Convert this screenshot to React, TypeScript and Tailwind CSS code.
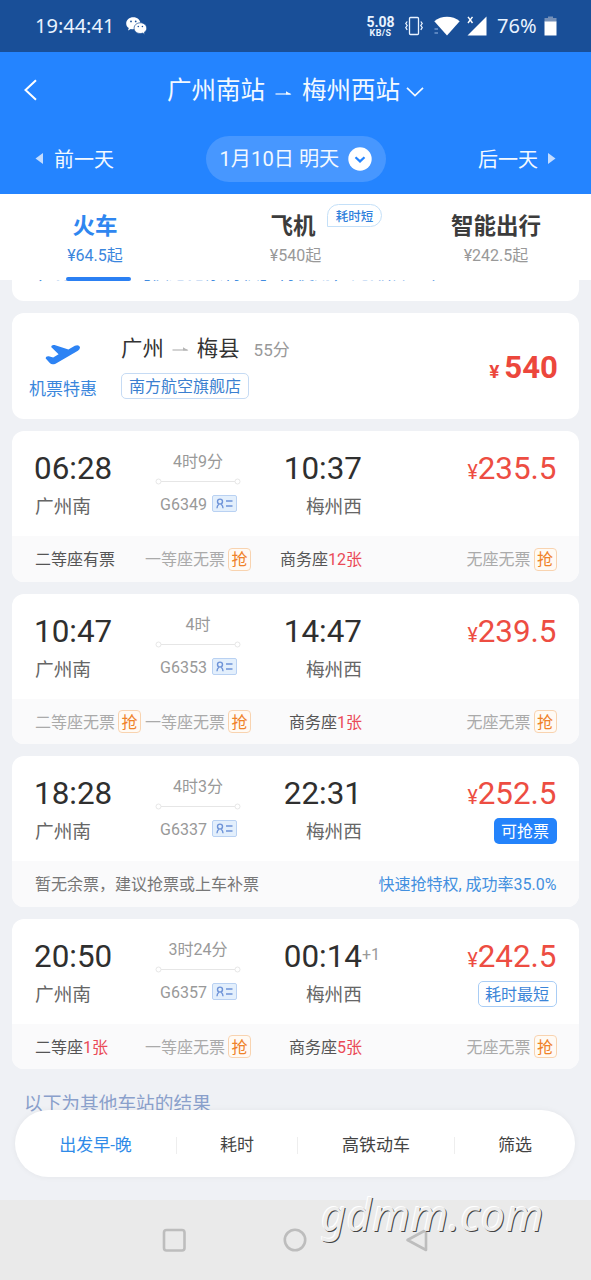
import { ReactNode } from "react";
import clsx from "clsx";

type Seat = {
  name: string;
  status?: string;
  count?: string;
  grab?: boolean;
};

type Train = {
  depart: string;
  arrive: string;
  nextDay?: boolean;
  duration: string;
  code: string;
  price: string;
  badge?: ReactNode;
  seats?: Seat[];
};

const trains: Train[] = [
  {
    depart: "06:28",
    arrive: "10:37",
    duration: "4时9分",
    code: "G6349",
    price: "235.5",
    seats: [
      { name: "二等座", status: "有票" },
      { name: "一等座", grab: true },
      { name: "商务座", count: "12张" },
      { name: "无座", grab: true },
    ],
  },
  {
    depart: "10:47",
    arrive: "14:47",
    duration: "4时",
    code: "G6353",
    price: "239.5",
    seats: [
      { name: "二等座", grab: true },
      { name: "一等座", grab: true },
      { name: "商务座", count: "1张" },
      { name: "无座", grab: true },
    ],
  },
  {
    depart: "18:28",
    arrive: "22:31",
    duration: "4时3分",
    code: "G6337",
    price: "252.5",
    badge: (
      <span className="flex h-[26px] w-[63px] items-center justify-center rounded-[5px] bg-[#2483fb] pt-[2px] text-[16px] text-white">
        可抢票
      </span>
    ),
  },
  {
    depart: "20:50",
    arrive: "00:14",
    nextDay: true,
    duration: "3时24分",
    code: "G6357",
    price: "242.5",
    badge: (
      <span className="flex h-[26px] w-[79px] items-center justify-center rounded-[5px] border border-[#a9cdf5] pt-[2px] text-[16px] text-[#3b85d8]">
        耗时最短
      </span>
    ),
    seats: [
      { name: "二等座", count: "1张" },
      { name: "一等座", grab: true },
      { name: "商务座", count: "5张" },
      { name: "无座", grab: true },
    ],
  },
];

function Arrow({ className }: { className?: string }) {
  return (
    <svg className={className} width="17" height="6" viewBox="0 0 17 6" fill="none" stroke="currentColor" strokeWidth="1.2">
      <path d="M0.5 4H15.5" />
      <path d="M11 1.2L16.5 4.4H11Z" fill="currentColor" stroke="none" />
    </svg>
  );
}

function WechatIcon() {
  return (
    <svg className="ml-[11px]" width="21" height="18" viewBox="0 0 21 18" fill="#fff">
      <path d="M7.3 0.3C3.3 0.3 0.2 3 0.2 6.4C0.2 8.4 1.2 10 2.8 11.1L2 13.5L4.8 12.1A8 8 0 0 0 14.4 6.4C14.4 3 11.3 0.3 7.3 0.3Z" />
      <path
        d="M14.3 5.8C10.8 5.8 8.1 8.1 8.1 11.2C8.1 14.2 10.8 16.5 14.3 16.5C15.1 16.5 15.9 16.4 16.6 16.1L18.8 17.4L18.3 15.3C19.8 14.3 20.7 12.9 20.7 11.2C20.7 8.1 17.8 5.8 14.3 5.8Z"
        stroke="#194f98"
        strokeWidth="0.7"
      />
      <g fill="#194f98">
        <circle cx="5" cy="4.4" r="0.9" />
        <circle cx="9.7" cy="4.4" r="0.9" />
        <circle cx="12.3" cy="9.5" r="0.8" />
        <circle cx="16.4" cy="9.5" r="0.8" />
      </g>
    </svg>
  );
}

function StatusBar() {
  return (
    <div className="flex h-[52px] items-center bg-[#194f98] pl-[35px] pr-[34px] font-['Noto_Sans',sans-serif] text-[20px] leading-none text-[#e9f3ff]">
      <span className="w-[80px]">19:44:41</span>
      <WechatIcon />
      <div className="ml-auto flex items-center">
        <div className="mr-[10px] flex w-[27px] flex-col items-center font-['Roboto',sans-serif] font-bold">
          <span className="text-[14px] leading-[13px]">5.08</span>
          <span className="text-[9px] leading-[8px] tracking-[0.4px]">KB/S</span>
        </div>
        <svg width="20" height="20" viewBox="0 0 20 20" fill="none" stroke="currentColor" strokeWidth="1.3">
          <rect x="5.5" y="1.5" width="9" height="17" rx="1" />
          <path d="M3.2 5.5L1.8 7.5L3.2 9.5L1.8 11.5L3.2 13.8M16.8 5.5L18.2 7.5L16.8 9.5L18.2 11.5L16.8 13.8" />
        </svg>
        <svg className="ml-[10px]" width="26" height="20" viewBox="0 0 26 20" fill="#fff">
          <path d="M0.3 5.2C7.5-0.6 18.5-0.6 25.7 5.2L13 19.5Z" />
          <path d="M0.5 13H4M0.5 17H4" stroke="#6f97cc" strokeWidth="1.3" />
        </svg>
        <svg className="ml-[7px]" width="20" height="20" viewBox="0 0 20 20" fill="#fff">
          <path d="M19.5 0.5V19.5H0.5Z" />
          <path d="M1 0.8L5.5 7M5.5 0.8L1 7" stroke="#fff" strokeWidth="1.4" />
        </svg>
        <span className="ml-[10px] w-[40px]">76%</span>
        <svg className="ml-[7px]" width="13" height="20" viewBox="0 0 13 20">
          <path d="M4 0.5H9V2H12.5V6H0.5V2H4Z" fill="#7590b8" />
          <rect x="0.5" y="5.5" width="12" height="14" fill="#fff" />
        </svg>
      </div>
    </div>
  );
}

function Header() {
  return (
    <div className="h-[142px] bg-[#2484ff] text-[#f3f9ff]">
      <div className="flex h-[76px] items-center">
        <svg className="ml-[23px]" width="15" height="22" viewBox="0 0 15 22" fill="none" stroke="#fff" strokeWidth="2">
          <path d="M13 1.2L2.5 11L13 20.8" />
        </svg>
        <div className="ml-[129px] flex items-center whitespace-nowrap pt-[3px] text-[24.5px] leading-none">
          <span>广州南站</span>
          <Arrow className="ml-[10px] mt-[3px]" />
          <span className="ml-[10px]">梅州西站</span>
          <svg className="ml-[6px]" width="18" height="12" viewBox="0 0 18 12" fill="none" stroke="currentColor" strokeWidth="1.7">
            <path d="M1 1.8L9 9.5L17 1.8" />
          </svg>
        </div>
      </div>
      <div className="flex h-[61px] items-center justify-between pl-[35px] pr-[35px] text-[20px] leading-none">
        <div className="flex w-[120px] items-center">
          <svg className="mr-[11px]" width="8" height="11" viewBox="0 0 8 11" fill="#c3dcff">
            <path d="M8 0V11L0.5 5.5Z" />
          </svg>
          <span className="pt-[2px]">前一天</span>
        </div>
        <div className="flex h-[46px] w-[180px] items-center rounded-full bg-[#4797ff] pl-[14px]">
          <span className="w-[120px] whitespace-nowrap pt-[2px] text-[20.2px]">1月10日 明天</span>
          <svg className="ml-[8px]" width="24" height="24" viewBox="0 0 24 24">
            <circle cx="12" cy="12" r="11.7" fill="#fff" />
            <path d="M7.5 10.2L12 14.4L16.5 10.2" fill="none" stroke="#2484ff" strokeWidth="2.2" />
          </svg>
        </div>
        <div className="flex w-[120px] items-center justify-end">
          <span className="pt-[2px]">后一天</span>
          <svg className="ml-[10px]" width="8" height="11" viewBox="0 0 8 11" fill="#c3dcff">
            <path d="M0 0V11L7.5 5.5Z" />
          </svg>
        </div>
      </div>
    </div>
  );
}

function Tab({ title, price, active, tip }: { title: string; price: string; active?: boolean; tip?: string }) {
  return (
    <div className={clsx("relative flex flex-col items-center pt-[18px]", active ? "text-[#2f86f0]" : "text-[#3c3c3c]")}>
      <span className={clsx("text-[22.5px] font-bold leading-[28px]", tip && "mr-[5px]")}>{title}</span>
      <span className={clsx("mt-[5px] text-[16px] leading-[21px]", active ? "text-[#3b86dd]" : "text-[#999]")}>{price}</span>
      {tip && (
        <span className="absolute left-[137px] top-[10px] flex h-[23px] w-[55px] items-center justify-center rounded-full rounded-bl-[2px] border border-[#c4e0f8] pt-[3px] text-[12.5px] font-medium leading-none text-[#2f80dc]">
          {tip}
        </span>
      )}
    </div>
  );
}

function Tabs() {
  return (
    <div className="relative z-10 grid h-[86px] grid-cols-[190px_211px_190px] bg-white">
      <Tab title="火车" price="¥64.5起" active />
      <Tab title="飞机" price="¥540起" tip="耗时短" />
      <Tab title="智能出行" price="¥242.5起" />
      <div className="absolute bottom-[-1px] left-[66px] h-[4px] w-[65px] rounded-full bg-[#2b80f3]" />
    </div>
  );
}

function FlightCard() {
  return (
    <div className="flex h-[106px] shrink-0 rounded-[12px] bg-white pr-[21px]">
      <div className="flex w-[102px] flex-col items-center pt-[31px]">
        <svg width="36" height="21" viewBox="138 460 106 62" fill="#2d83f4">
          <path d="M156 469Q157 461 166 463L207 476L226 465Q238 461 241 469Q242 475 235 480L169 518Q158 523 152 516L140 503Q139 495 149 496L162 500L178 490Z" />
        </svg>
        <span className="mt-[13px] text-[17px] leading-[22px] text-[#3a86dc]">机票特惠</span>
      </div>
      <div className="pl-[7px] pt-[22px]">
        <div className="flex h-[26px] items-center pt-[2px] text-[21.4px] leading-none text-[#333]">
          广州
          <Arrow className="mx-[8px] text-[#b5b5b5]" />
          梅县
          <span className="ml-[14px] mt-[3px] text-[17px] text-[#999]">55分</span>
        </div>
        <span className="mt-[12px] flex h-[26px] w-[128px] items-center justify-center rounded-[5px] border border-[#c6dbf4] pt-[2px] text-[16px] leading-none text-[#3a7fd0]">
          南方航空旗舰店
        </span>
      </div>
      <div className="ml-auto flex items-baseline pt-[36px] font-bold leading-[38px] text-[#ec473c]">
        <span className="mr-[5px] text-[19px]">¥</span>
        <span className="text-[31.2px]">540</span>
      </div>
    </div>
  );
}

function IdCard() {
  return (
    <svg className="mb-[2px]" width="25" height="17" viewBox="0 0 25 17" fill="none" stroke="#6f94d8" strokeWidth="1.4">
      <rect x="0.5" y="0.5" width="24" height="16" rx="1.5" fill="#e3effc" stroke="#b9d1f2" strokeWidth="1" />
      <circle cx="8" cy="6.6" r="2.5" />
      <path d="M5 13.2C5 10.8 6 9.8 6.8 9.2M11 13.2C11 10.8 10 9.8 9.2 9.2M14 6H20.5M14 11H20.5" />
    </svg>
  );
}

function SeatItem({ seat }: { seat: Seat }) {
  return (
    <div className="flex items-center justify-end whitespace-nowrap first:justify-start">
      {seat.grab ? (
        <>
          <span className="pt-[2px] text-[#aaa]">{seat.name}无票</span>
          <span className="ml-[3px] flex h-[23px] w-[23px] shrink-0 items-center justify-center rounded-[4px] border border-[#f8d3b0] bg-[#fffaf4] pt-[2px] text-[#ef8229]">
            抢
          </span>
        </>
      ) : (
        <>
          <span className="pt-[2px] text-[#555]">
            {seat.name}
            {seat.status}
          </span>
          <span className="pt-[2px] text-[#ea4a57]">{seat.count}</span>
        </>
      )}
    </div>
  );
}

function TrainCard({ train }: { train: Train }) {
  return (
    <div className="h-[150.5px] shrink-0 overflow-hidden rounded-[12px] bg-white leading-none">
      <div className="flex h-[105px] pl-[23px] pr-[22.5px]">
        <div className="w-[110px] pt-[19px]">
          <div className="-ml-px text-[31.4px] leading-[38px] text-[#2f2f2f]">{train.depart}</div>
          <div className="mt-[7px] text-[18.7px] leading-[24px] text-[#666]">广州南</div>
        </div>
        <div className="flex w-[106px] flex-col items-center pt-[20px] text-[16px] text-[#999]">
          <span className="leading-[21px]">{train.duration}</span>
          <svg className="mt-[6px]" width="86" height="7" viewBox="0 0 86 7" fill="none" stroke="#e6e6e6">
            <circle cx="3.5" cy="3.5" r="2.5" />
            <circle cx="82.5" cy="3.5" r="2.5" />
            <path d="M6 3.5H80" />
          </svg>
          <div className="ml-px mt-[9px] flex items-center gap-[5px] leading-[20px]">
            <span className="pt-px">{train.code}</span>
            <IdCard />
          </div>
        </div>
        <div className="relative flex w-[111px] flex-col items-end pt-[19px]">
          <div className="text-[31.4px] leading-[38px] text-[#2f2f2f]">{train.arrive}</div>
          <div className="mt-[7px] text-[18.7px] leading-[24px] text-[#666]">梅州西</div>
          {train.nextDay && <span className="absolute left-[111px] top-[28px] text-[16px] text-[#999]">+1</span>}
        </div>
        <div className="ml-auto flex flex-col items-end pt-[19px]">
          <div className="flex h-[38px] items-baseline leading-[38px] text-[#ed4d42]">
            <span className="text-[19.5px]">¥</span>
            <span className="text-[31.4px]">{train.price}</span>
          </div>
          <div className="mt-[5px]">{train.badge}</div>
        </div>
      </div>
      {train.seats ? (
        <div className="grid h-[46px] grid-cols-[106px_110px_111px_1fr] items-center bg-[#fafafb] pl-[23px] pr-[22.5px] text-[16px]">
          {train.seats.map((seat) => (
            <SeatItem key={seat.name} seat={seat} />
          ))}
        </div>
      ) : (
        <div className="flex h-[46px] items-center justify-between bg-[#fafafb] pl-[23px] pr-[22.5px] pt-[2px] text-[16px]">
          <span className="text-[#777]">暂无余票，建议抢票或上车补票</span>
          <span className="text-[#4390df]">快速抢特权, 成功率35.0%</span>
        </div>
      )}
    </div>
  );
}

function FilterBar() {
  return (
    <div className="absolute left-[15px] top-[1110px] grid h-[67px] w-[560px] grid-cols-[162px_121px_157px_120px] items-center rounded-full bg-white pt-[3px] text-center text-[17px] leading-none text-[#444] shadow-[0_0_6px_rgba(0,0,0,0.05)]">
      <span className="border-r border-[#eee] text-[#2f8be8]">出发早-晚</span>
      <span className="border-r border-[#eee]">耗时</span>
      <span className="border-r border-[#eee]">高铁动车</span>
      <span>筛选</span>
    </div>
  );
}

function NavBar() {
  return (
    <div className="relative h-[80px] bg-[#eaeaea]">
      <svg className="pl-[160px] pt-[26px]" width="431" height="54" viewBox="160 1226 271 28" fill="none" stroke="#bdbdbd" strokeWidth="2.6">
        <rect x="164" y="1230" width="20.5" height="20.5" rx="2.5" />
        <circle cx="295" cy="1240" r="10.2" />
        <path d="M426 1230V1250L407.5 1240Z" strokeLinejoin="round" />
      </svg>
      <span className="absolute left-[321px] top-[-13px] font-['Noto_Sans',sans-serif] text-[43px] italic leading-[56px] tracking-[0.7px] text-[#ededed] [text-shadow:1px_1px_0_#444,-1px_-1px_0_#fff]">
        gdmm.com
      </span>
    </div>
  );
}

export default function App() {
  return (
    <div className="relative flex h-[1280px] w-[591px] flex-col overflow-hidden bg-[#eff1f5] font-['Roboto','Noto_Sans_CJK_SC',sans-serif]">
      <StatusBar />
      <Header />
      <Tabs />
      <div className="flex flex-1 flex-col gap-[12px] overflow-hidden px-[12px]">
        {/* notice card, mostly scrolled under the tabs */}
        <div className="-mt-[20px] flex h-[41px] shrink-0 items-end rounded-b-[12px] bg-white pb-[18px] pl-[25px]">
          <span className="whitespace-nowrap text-[18.2px] leading-[20px] text-[#3f8be0]">，抢票特权 【快速抢票特权】待使用，免排队上车</span>
        </div>
        <FlightCard />
        {trains.map((train) => (
          <TrainCard key={train.code} train={train} />
        ))}
        <div className="mt-[11px] pl-[12px] text-[18.7px] leading-[24px] text-[#8aa0cb]">以下为其他车站的结果</div>
      </div>
      <FilterBar />
      <NavBar />
    </div>
  );
}
